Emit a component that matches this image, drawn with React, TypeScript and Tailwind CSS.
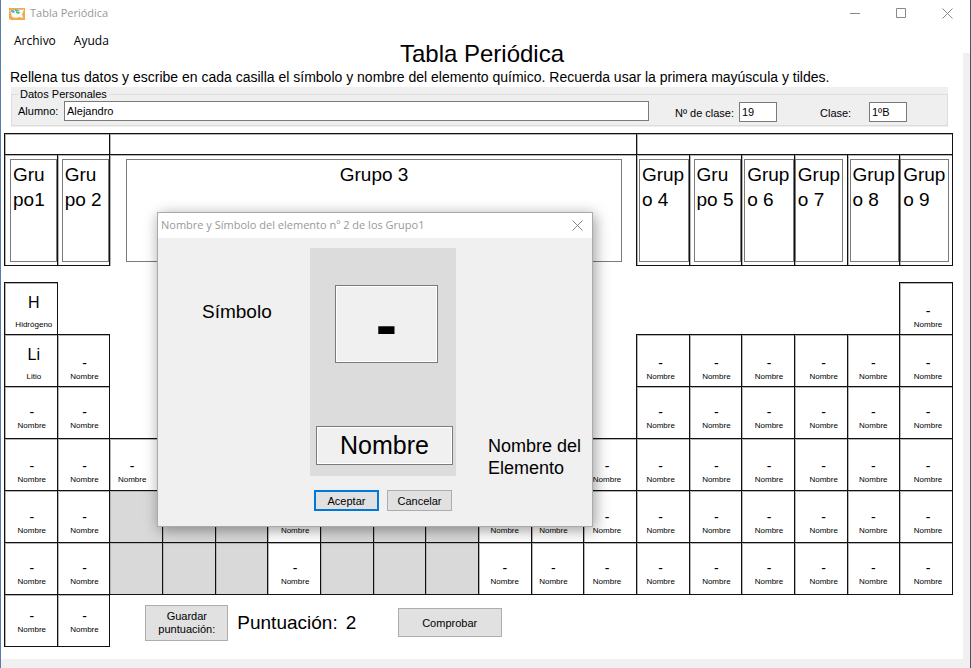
import React from "react";

type Cell = { symbol: string; name: string } | "blocked" | "empty" | null;

const pending: Cell = { symbol: "-", name: "Nombre" };
const repeat = (cell: Cell, count: number): Cell[] => Array(count).fill(cell);

const groups = [
  { lines: "Gru\npo1", label: "Grupo 1", pad: "pl-[5px]" },
  { lines: "Gru\npo 2", label: "Grupo 2", pad: "pl-1" },
  { lines: "Grupo 3", label: "Grupo 3", pad: "pl-4 pr-3.5" },
  { lines: "Grup\no 4", label: "Grupo 4", pad: "pl-0.5" },
  { lines: "Gru\npo 5", label: "Grupo 5", pad: "pl-1" },
  { lines: "Grup\no 6", label: "Grupo 6", pad: "pl-0.5" },
  { lines: "Grup\no 7", label: "Grupo 7", pad: "pr-1" },
  { lines: "Grup\no 8", label: "Grupo 8", pad: "pl-0.5" },
  { lines: "Grup\no 9", label: "Grupo 9", pad: "pr-[3px]" },
];

const periods: { pad: string; cells: Cell[] }[] = [
  { pad: "pb-[3px]", cells: [{ symbol: "H", name: "Hidrógeno" }, ...repeat(null, 16), pending] },
  { pad: "pb-[3px]", cells: [{ symbol: "Li", name: "Litio" }, pending, ...repeat(null, 10), ...repeat(pending, 6)] },
  { pad: "pb-1.5", cells: [...repeat(pending, 2), ...repeat(null, 10), ...repeat(pending, 6)] },
  { pad: "pb-1", cells: [...repeat(pending, 3), ...repeat("empty", 8), ...repeat(pending, 7)] },
  { pad: "pb-[5px]", cells: [...repeat(pending, 2), ...repeat("blocked", 3), pending, ...repeat("blocked", 3), ...repeat(pending, 9)] },
  { pad: "pb-1.5", cells: [...repeat(pending, 2), ...repeat("blocked", 3), pending, ...repeat("blocked", 3), ...repeat(pending, 9)] },
  { pad: "pb-2.5", cells: repeat(pending, 2) },
];

// Horizontal alignment of the labels in each of the eighteen columns
const columnPad = [
  "pl-0.5", "pl-0.5", "pr-2", "", "", "pl-0.5", "", "", "",
  "", "pr-2", "pr-1.5", "pr-1", "pl-0.5", "pl-0.5", "pl-1.5", "", "pl-1",
];

const line = "border border-[#111] shadow-[inset_1px_1px_0_#b4b4b4]";
const field = "border border-[#7a7a7a] bg-white text-[11px] leading-4 outline-none";
const button = "border border-[#adadad] bg-[#e1e1e1] text-[11px] text-black";

function ElementCell({ cell, pad, shift }: { cell: Cell; pad: string; shift: string }) {
  if (cell === null) return <td className="p-0" />;
  if (cell === "blocked") return <td className={`${line} bg-[#d9d9d9] p-0`} />;
  if (cell === "empty") return <td className={`${line} p-0`} />;
  const solved = cell.symbol !== "-";
  return (
    <td className={`${line} p-0 align-bottom ${pad}`}>
      <div className={`flex flex-col items-center ${solved ? "pl-1.5" : shift}`}>
        <span className={solved ? "pb-1.5 text-[16px] leading-5" : "text-[14px] leading-4"}>{cell.symbol}</span>
        <span className="text-[8px] leading-3">{cell.name}</span>
      </div>
    </td>
  );
}

function Cross() {
  return (
    <svg width="11" height="11" viewBox="0 0 11 11" fill="none" stroke="#888" aria-hidden="true">
      <path d="M.5 .5l10 10M10.5 .5l-10 10" />
    </svg>
  );
}

function TitleBar() {
  return (
    <header className="flex h-[27px] shrink-0 items-center bg-white pl-2 pr-[17px]">
      <svg width="16" height="12" viewBox="0 0 16 12" aria-hidden="true">
        <path fill="#f5a94e" d="M0 0h16v12H2l-2-1z" />
        <path fill="#f4fbf8" d="M1 2l3 1 3-2 6 1 2-1-1 3-1 2 1 4-4-1-3 1-4-1-1-4z" />
        <path fill="#3cb8c8" d="M2 2l4 1-1 2-3-1zM6 1l5 1-2 1H6z" />
        <path fill="#44c56b" d="M7 3l4 1-1 2-3-1z" />
      </svg>
      <span className="flex-1 pl-[5px] font-['Open_Sans','Noto_Sans',sans-serif] text-[11px] text-[#999]">Tabla Periódica</span>
      <div className="flex items-center gap-[35px]">
        <button aria-label="Minimizar">
          <svg width="11" height="11" viewBox="0 0 11 11" stroke="#888" aria-hidden="true"><path d="M0 5.5h10" /></svg>
        </button>
        <button aria-label="Maximizar">
          <svg width="11" height="11" viewBox="0 0 11 11" fill="none" stroke="#888" aria-hidden="true"><path d="M.5 .5h9v9h-9z" /></svg>
        </button>
        <button aria-label="Cerrar"><Cross /></button>
      </div>
    </header>
  );
}

function PersonalData() {
  return (
    <div className="ml-2.5 mr-[15px] bg-[#efefef] pb-px">
      <fieldset className="flex h-[39px] items-start border border-[#dcdcdc] pl-1.5 pr-10 text-[11px]">
        <legend className="px-0.5 leading-[14px]">Datos Personales</legend>
        <label htmlFor="student" className="w-[46px] pt-0.5 leading-4">Alumno:</label>
        <input id="student" defaultValue="Alejandro" className={`${field} h-5 min-w-0 flex-1 px-0.5`} />
        <label htmlFor="number" className="w-[90px] pl-[26px] pt-1 leading-4 whitespace-nowrap">Nº de clase:</label>
        <input id="number" defaultValue="19" className={`${field} mt-px h-5 w-[38px] px-0.5`} />
        <label htmlFor="classroom" className="w-[92px] pl-[43px] pt-1 leading-4">Clase:</label>
        <input id="classroom" defaultValue="1ºB" className={`${field} mt-px h-5 w-[38px] px-0.5`} />
      </fieldset>
    </div>
  );
}

function PeriodicTable() {
  return (
    <div className="mt-1.5 pl-[3px] pr-2.5">
      <table className="w-full table-fixed border-collapse">
        <colgroup>
          {columnPad.map((_, i) => <col key={i} />)}
        </colgroup>
        <thead>
          <tr className="h-[21px]">
            <td colSpan={2} className={line} />
            <td colSpan={10} className={line} />
            <td colSpan={6} className={line} />
          </tr>
          <tr className="h-[111px]">
            {groups.map((group, i) => (
              <th key={group.label} colSpan={i === 2 ? 10 : 1} className={`${line} p-0 font-normal ${i === 2 ? "border-b-0" : ""}`}>
                <div className={group.pad}>
                  <textarea
                    readOnly
                    rows={2}
                    aria-label={group.label}
                    value={group.lines}
                    className={`block h-[103px] w-full resize-none overflow-hidden border border-[#7a7a7a] bg-white px-0.5 pt-0.5 text-[19px] leading-[25px] whitespace-pre outline-none ${i === 2 ? "text-center" : ""}`}
                  />
                </div>
              </th>
            ))}
          </tr>
        </thead>
        <tbody>
          <tr className="h-[17px]"><td colSpan={18} className="p-0" /></tr>
          {periods.map((period, row) => (
            <tr key={row} className="h-[52px]">
              {period.cells.map((cell, column) => (
                <ElementCell key={column} cell={cell} pad={period.pad} shift={columnPad[column]} />
              ))}
              {row === 6 && (
                <td colSpan={16} className="p-0 pt-1">
                  <div className="flex items-center pl-[35px]">
                    <button className={`${button} h-9 w-[83px] leading-[13px]`}>Guardar puntuación:</button>
                    <span className="pl-[9px] text-[19px] leading-6">Puntuación:</span>
                    <output className="w-[53px] pl-2 text-[19px] leading-6">2</output>
                    <button className={`${button} ml-[7px] h-[29px] w-[104px]`}>Comprobar</button>
                  </div>
                </td>
              )}
            </tr>
          ))}
        </tbody>
      </table>
    </div>
  );
}

function ElementDialog() {
  const box = "border border-[#7a7a7a] bg-[#f0f0f0] text-center outline-none shadow-[inset_0_0_0_1px_#fff]";
  return (
    <div role="dialog" aria-labelledby="dialog-title" className="absolute left-[156px] top-[212px] w-[436px] border border-[#aaa] bg-[#f0f0f0] shadow-[2px_3px_14px_rgba(0,0,0,0.4)]">
      <div className="flex h-[25px] items-center justify-between bg-white pl-[3px] pr-[9px]">
        <h2 id="dialog-title" className="font-['Open_Sans','Noto_Sans',sans-serif] text-[11px] text-[#999]">
          Nombre y Símbolo del elemento nº 2 de los Grupo1
        </h2>
        <button aria-label="Cerrar diálogo"><Cross /></button>
      </div>
      <form className="grid grid-cols-[152px_146px_1fr] grid-rows-[auto_auto] pt-2.5 pb-[15px]" onSubmit={(e) => e.preventDefault()}>
        <label htmlFor="symbol" className="pl-11 pt-[52px] text-[19px] leading-6">Símbolo</label>
        <div className="flex flex-col items-end bg-[#dcdcdc] pt-[37px] pr-[3px] pb-[11px]">
          <input id="symbol" defaultValue="-" className={`${box} mr-[15px] h-[78px] w-[103px] pt-0.5 text-[64px] font-bold`} />
          <input id="name" defaultValue="Nombre" className={`${box} mt-[63px] h-[39px] w-[137px] text-[25px]`} />
        </div>
        <label htmlFor="name" className="row-span-2 pt-[187px] pl-8 text-[18px] leading-[22px]">Nombre del Elemento</label>
        <div className="col-start-2 flex justify-center gap-2 pt-3.5">
          <button className="h-[21px] w-[65px] border-2 border-[#0078d7] bg-[#e1e1e1] text-[11px] leading-4">Aceptar</button>
          <button type="button" className={`${button} h-[21px] w-[65px] leading-4`}>Cancelar</button>
        </div>
      </form>
    </div>
  );
}

export default function App() {
  return (
    <div className="relative flex min-h-screen flex-col border-l border-r border-l-[#5b7ba8] border-r-[#3f5866] bg-white font-['Liberation_Sans',Arial,sans-serif] text-black">
      <TitleBar />
      <nav className="flex h-[26px] shrink-0 items-center gap-[18px] pl-[13px] pt-0.5 font-['Open_Sans','Noto_Sans',sans-serif] text-[12px]">
        <button>Archivo</button>
        <button>Ayuda</button>
      </nav>
      <div className="flex flex-1 bg-[#f0f0f0] pr-[7px] pb-[9px]">
        <main className="flex-1 bg-white">
          <h1 className="-mt-[11px] text-center text-[24px] leading-6">Tabla Periódica</h1>
          <p className="pl-[9px] pt-px text-[14px] leading-5">
            Rellena tus datos y escribe en cada casilla el símbolo y nombre del elemento químico. Recuerda usar la primera mayúscula y tildes.
          </p>
          <PersonalData />
          <PeriodicTable />
        </main>
      </div>
      <ElementDialog />
    </div>
  );
}
